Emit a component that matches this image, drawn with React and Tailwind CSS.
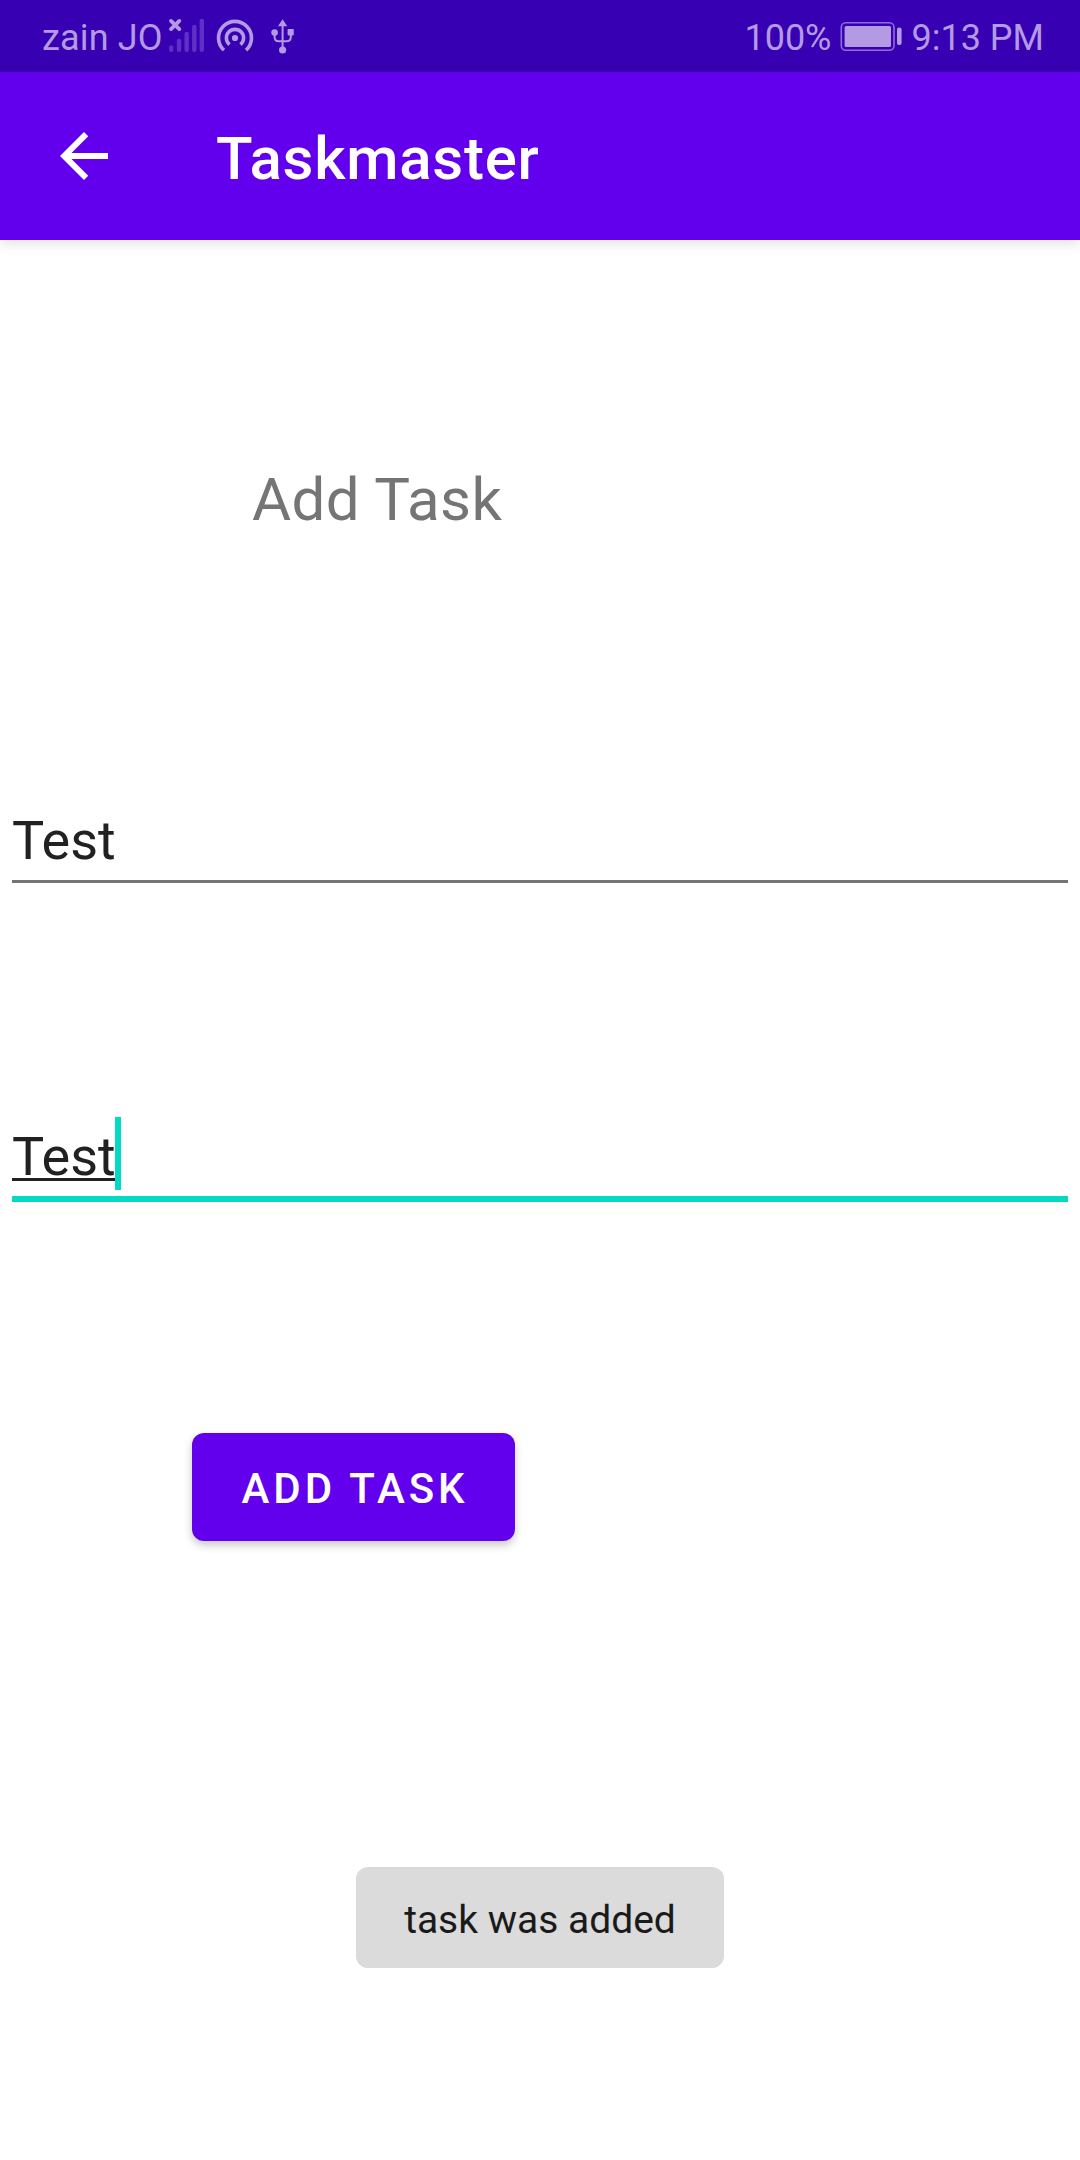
function SignalIcon() {
  return (
    <svg className="ml-[6px] h-[38px] w-[36px] shrink-0" viewBox="168 17 36 38" fill="none" strokeLinecap="round">
      <path d="M171 20.900l8.300 8.200M179.300 20.900l-8.300 8.200" stroke="#b49ae2" strokeWidth="3.800" />
      <path d="M171.200 47.500v2.200M179 41v8.700M186.700 34v15.700M194.300 27v22.700M201.800 21v28.700" stroke="#5e30c5" strokeWidth="4.400" />
    </svg>
  );
}

function HotspotIcon() {
  return (
    <svg className="ml-[12px] h-[38px] w-[38px] shrink-0" viewBox="216 17 38 38" fill="none" stroke="#b49ae2" strokeWidth="3.600">
      <path d="M224 50.200A16.500 16.500 0 1 1 246 50.200" />
      <path d="M229.500 44.600A8.600 8.600 0 1 1 240.500 44.600" />
      <circle cx="235" cy="38" r="3.100" fill="#b49ae2" stroke="none" />
    </svg>
  );
}

function UsbIcon() {
  return (
    <svg className="ml-[16px] h-[36px] w-[26px] shrink-0" viewBox="270 18 26 36" fill="#b49ae2">
      <path d="M282.600 19.300l4.700 7h-9.400z" />
      <circle cx="282.600" cy="50" r="3.600" />
      <circle cx="274.600" cy="32.600" r="3.300" />
      <rect x="287.600" y="29" width="6.200" height="6.400" rx="0.800" />
      <path d="M282.600 25v24M274.600 33v4.200q0 4 4 4h8q4.200 0 4.200-4V33" fill="none" stroke="#b49ae2" strokeWidth="2" />
    </svg>
  );
}

function BatteryIcon() {
  return (
    <svg className="ml-[8px] h-[30px] w-[62px] shrink-0" viewBox="840 21 62 30">
      <rect x="841.300" y="22.800" width="52.700" height="27.400" rx="4.500" fill="none" stroke="#8f6cd8" strokeWidth="1.600" />
      <rect x="844.600" y="26" width="46.400" height="21" rx="1.500" fill="#b49ae2" />
      <rect x="897" y="27.500" width="4.600" height="17.600" rx="2" fill="#b49ae2" />
    </svg>
  );
}

function StatusBar() {
  return (
    <div className="flex h-[72px] items-center justify-between bg-[#3700b3] pr-[36px] pl-[42px] text-[36px] leading-[42px] text-[#b49ae2]">
      <div className="flex items-center">
        <span className="w-[120px] pt-[3px] tracking-[0.15px] whitespace-nowrap">zain JO</span>
        <SignalIcon />
        <HotspotIcon />
        <UsbIcon />
      </div>
      <div className="flex items-center">
        <span className="pt-[3px] whitespace-nowrap">100%</span>
        <BatteryIcon />
        <span className="ml-[10px] pt-[3px] whitespace-nowrap">9:13 PM</span>
      </div>
    </div>
  );
}

function AppBar() {
  return (
    <header className="flex h-[168px] items-center bg-[#6200ee] shadow-[0_3px_12px_rgba(0,0,0,0.13)]">
      <button className="ml-[48px] h-[72px] w-[72px]" aria-label="Back">
        <svg viewBox="0 0 24 24" className="h-[72px] w-[72px]" fill="#fff">
          <path d="M20 11H7.830l5.590-5.590L12 4l-8 8 8 8 1.410-1.410L7.830 13H20v-2z" />
        </svg>
      </button>
      <h1 className="ml-[96px] pt-[6px] text-[60px] leading-[70px] font-medium tracking-[0.75px] text-white">Taskmaster</h1>
    </header>
  );
}

export default function App() {
  return (
    <div className="relative flex h-[2160px] w-[1080px] flex-col overflow-hidden bg-white font-['Roboto',sans-serif]">
      <StatusBar />
      <AppBar />
      <main className="flex flex-col items-start">
        <h2 className="mt-[225px] ml-[252px] text-[60px] leading-[70px] tracking-[0.4px] text-[#757575]">Add Task</h2>
        <div className="mt-[265px] ml-[12px] h-[83px] w-[1056px] border-b-[3px] border-[#757575] text-[54px] leading-[82px] text-[#212121]">
          Test
        </div>
        <div className="mt-[234px] ml-[12px] flex h-[85px] w-[1056px] items-start border-b-[6px] border-[#03dac5] text-[54px] text-[#212121]">
          <span className="h-[64px] w-[103px] border-b-[3px] border-[#212121] leading-[80px]">Test</span>
          <span className="h-[73px] w-[6px] bg-[#03dac5]" />
        </div>
        <button className="mt-[231px] ml-[192px] h-[108px] w-[323px] rounded-[12px] bg-[#6200ee] pt-[3px] pl-[3px] text-[42px] leading-[50px] font-medium tracking-[3.900px] text-white shadow-[0_4px_8px_rgba(0,0,0,0.22)]">
          ADD TASK
        </button>
      </main>
      <div className="absolute top-[1867px] left-[356px] flex h-[101px] w-[368px] items-center justify-center rounded-[12px] bg-[#dbdbdb] pt-[4px] text-[39px] leading-[46px] text-[#1a1a1a]">
        task was added
      </div>
    </div>
  );
}
